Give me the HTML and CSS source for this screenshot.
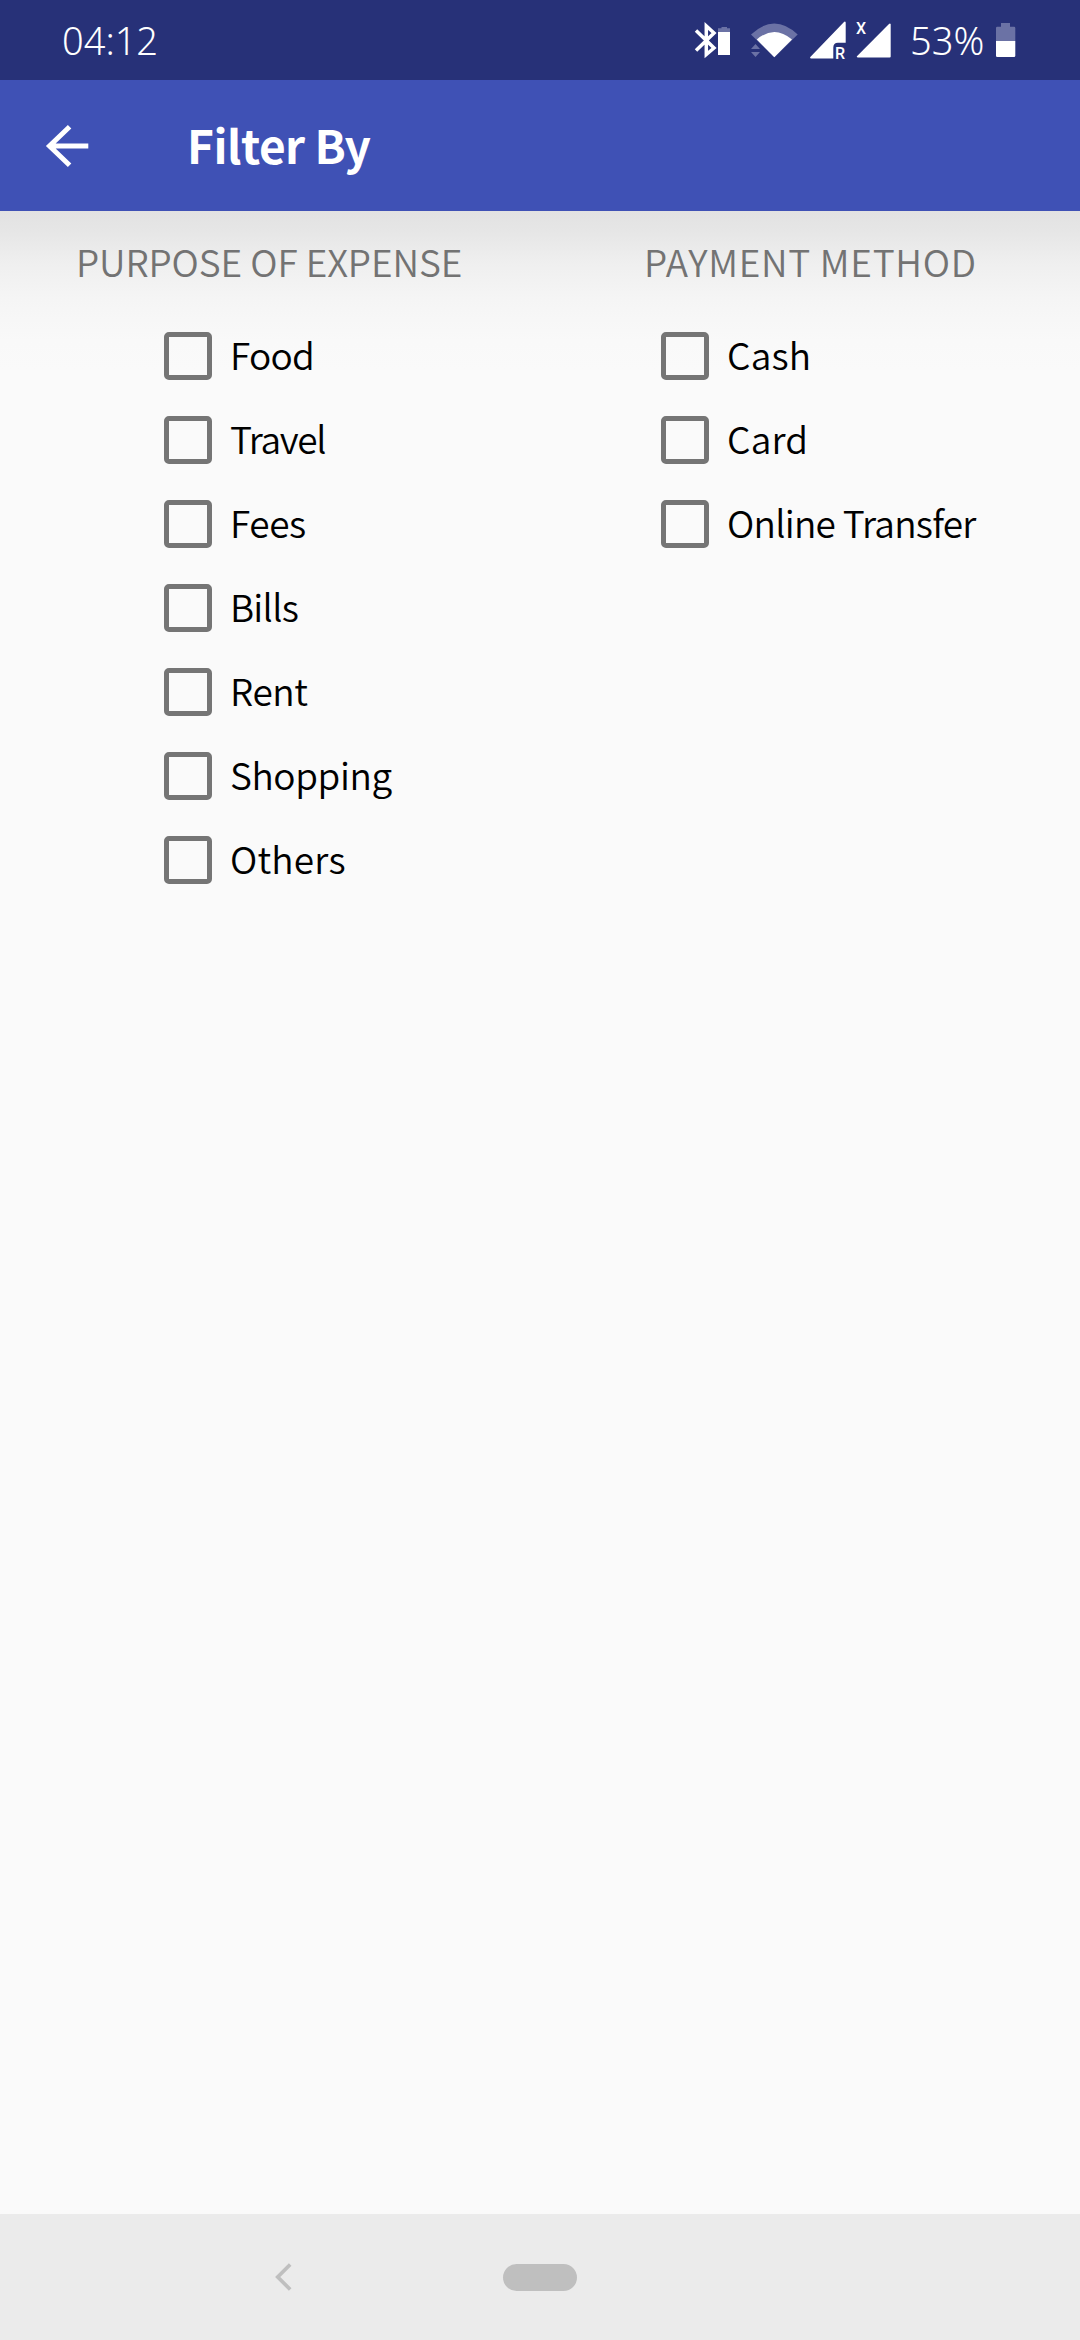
FILE: index.html
```
<!DOCTYPE html>
<html lang="en">
<head>
<meta charset="utf-8">
<title>Filter By</title>
<link rel="stylesheet" href="styles.css">
</head>
<body>
<div class="screen">
  <header class="status">
    <span class="clock">04:12</span>
    <div class="status-icons">
      <svg class="bluetooth" width="38" height="80" viewBox="694 0 38 80">
        <path d="M696 30.500 714 48 706.300 54.500V26L714 33 696 50.500" fill="none" stroke="#fff" stroke-width="3.500"/>
        <path d="M718 32V28.300h3.500V27h5.500v1.300H730V32z" fill="#6b72a5"/>
        <path d="M718 32h12v23h-12z" fill="#fff"/>
      </svg>
      <svg class="wifi" width="48" height="80" viewBox="750 0 48 80">
        <path d="M751 34.500Q774.300 12.500 797.700 34.500L774.300 57.300z" fill="#6b72a5"/>
        <path d="M756.800 39.500Q774.300 24.500 792 39.500L774.300 57.300z" fill="#fff"/>
        <path d="M755.500 44l4.500 5h-9zM755.500 57l4.500-5h-9z" fill="#6b72a5"/>
      </svg>
      <svg class="signal" width="88" height="80" viewBox="808 0 88 80">
        <path d="M845.700 22.500V42.800H838q-4.700 0-4.700 4.700V58.500H811q-1.500-.4-.7-1.500L844 22q1.300-1 1.700.5z" fill="#fff"/>
        <path d="M890.700 24.500V56.500q0 1-1 1H858q-2-.2-.8-1.500L889 24q1.300-1 1.700.5z" fill="#fff"/>
        <text class="roam" x="835" y="58.500">R</text>
        <text class="cross" x="856" y="34">X</text>
      </svg>
      <span class="percent">53%</span>
      <svg class="battery" width="20" height="80" viewBox="996 0 20 80">
        <path d="M996 41V28q0-1.300 1.300-1.300H1001V23h9v3.700h4q1.300 0 1.300 1.300V41z" fill="#6b72a5"/>
        <path d="M996 41h19.300V55.700q0 1.300-1.300 1.300h-16.700q-1.300 0-1.300-1.300z" fill="#fff"/>
      </svg>
    </div>
  </header>

  <div class="appbar">
    <svg class="back" width="48" height="48" viewBox="0 0 48 48">
      <path d="M44.300 24H6M25.600 4.800 5.500 24 25.600 43.200" fill="none" stroke="#fff" stroke-width="5"/>
    </svg>
    <h1 class="title">Filter By</h1>
  </div>

  <main class="filters">
    <section class="group purpose">
      <h2 class="heading">PURPOSE OF EXPENSE</h2>
      <label class="option tight"><input class="box" type="checkbox">Food</label>
      <label class="option tightest"><input class="box" type="checkbox">Travel</label>
      <label class="option snug"><input class="box" type="checkbox">Fees</label>
      <label class="option tight"><input class="box" type="checkbox">Bills</label>
      <label class="option snug"><input class="box" type="checkbox">Rent</label>
      <label class="option snug"><input class="box" type="checkbox">Shopping</label>
      <label class="option loose"><input class="box" type="checkbox">Others</label>
    </section>
    <section class="group method">
      <h2 class="heading">PAYMENT METHOD</h2>
      <label class="option loose"><input class="box" type="checkbox">Cash</label>
      <label class="option loose"><input class="box" type="checkbox">Card</label>
      <label class="option tight"><input class="box" type="checkbox">Online Transfer</label>
    </section>
  </main>

  <nav class="navbar">
    <svg class="nav-back" width="18" height="28" viewBox="0 0 18 28">
      <path d="M15.200 1.500 2.700 14l12.500 12.500" fill="none" stroke="#bfbfbf" stroke-width="3.700"/>
    </svg>
    <span class="home"></span>
  </nav>
</div>
</body>
</html>
```
FILE: styles.css
```
* { box-sizing: border-box; }

body {
  margin: 0;
  background: #fafafa;
  color: #000;
  font-family: "Noto Sans CJK SC", "Noto Sans", sans-serif;
}

.screen {
  display: flex;
  flex-direction: column;
  width: 1080px;
  height: 2340px;
  overflow: hidden;
}

.status {
  display: flex;
  justify-content: space-between;
  height: 80px;
  padding: 0 64px 0 62px;
  background: #273178;
  color: #fff;
  font: 350 38px/80px "Noto Sans", sans-serif;
}

.status-icons { display: flex; }
.wifi { margin-left: 18px; }
.signal { margin-left: 10px; }
.percent { width: 85px; margin-left: 14px; margin-right: 1px; }
.roam, .cross { fill: #fff; font-family: Roboto, sans-serif; font-weight: 500; }
.roam { font-size: 16px; }
.cross { font-size: 16px; }

.appbar {
  display: flex;
  align-items: center;
  height: 131px;
  padding-left: 44px;
  background: #3f51b5;
  color: #fff;
}

.title {
  margin: 0 0 0 95px;
  padding-bottom: 3px;
  font-size: 46px;
  font-weight: 700;
  line-height: 60px;
  letter-spacing: -0.5px;
}

.filters {
  display: flex;
  flex: 1;
  background: linear-gradient(#e2e2e2, #e6e6e6 20px, #efefef 52px, #f5f5f5 88px, #f9f9f9 130px, #fafafa 160px);
}

.group { display: flex; flex-direction: column; }
.purpose { width: 568px; padding-left: 76px; }
.method { padding-left: 76px; }

.heading {
  height: 103px;
  margin: 0;
  padding-bottom: 3px;
  color: #737373;
  font-size: 37px;
  font-weight: 350;
  line-height: 100px;
}
.purpose .heading { letter-spacing: -0.1px; }
.method .heading { letter-spacing: 0.7px; }

.option {
  display: flex;
  align-items: center;
  height: 84px;
  padding-bottom: 4px;
  font-size: 37px;
  font-weight: 350;
  line-height: 80px;
  white-space: pre;
}
.purpose .option { padding-left: 88px; }
.method .option { padding-left: 17px; }

.tightest { letter-spacing: -1.3px; }
.tight { letter-spacing: -0.75px; }
.snug { letter-spacing: -0.4px; }
.loose { letter-spacing: 0.2px; }

.box {
  flex: none;
  width: 48px;
  height: 48px;
  margin: 4px 18px 0 0;
  border: 5px solid #757575;
  border-radius: 5px;
  appearance: none;
}

.navbar {
  display: flex;
  align-items: center;
  height: 126px;
  padding-left: 275px;
  background: #ebebeb;
}

.home {
  width: 74px;
  height: 27px;
  margin-left: 210px;
  border-radius: 14px;
  background: #bfbfbf;
}
```
